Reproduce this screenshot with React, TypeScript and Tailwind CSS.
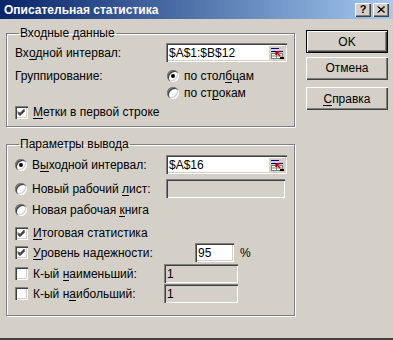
import React from 'react';

const font = "font-['Liberation_Sans','Arial',sans-serif]";

// accelerator letter, underlined like a Windows dialog
const U = ({ children }: { children: React.ReactNode }) => (
  <span className="inline-block border-b border-black leading-[11px]">{children}</span>
);

const sunken = 'shadow-[inset_1px_1px_0_#808080,inset_2px_2px_0_#404040,inset_-1px_-1px_0_#fff,inset_-2px_-2px_0_#d4d0c8]';
const raised = 'shadow-[inset_1px_1px_0_#fff,inset_-1px_-1px_0_#404040,inset_-2px_-2px_0_#808080]';

const Radio = ({ checked = false }: { checked?: boolean }) => (
  <span className={`relative inline-block w-[12px] h-[12px] rounded-full bg-white shrink-0 ${sunken}`}>
    {checked && <span className="absolute left-[4px] top-[4px] w-[4px] h-[4px] rounded-full bg-black" />}
  </span>
);

const Check = ({ checked = false }: { checked?: boolean }) => (
  <span className={`relative inline-block w-[13px] h-[13px] bg-white shrink-0 ${sunken}`}>
    {checked && (
      <svg width="13" height="13" viewBox="0 0 13 13" className="absolute left-0 top-0">
        <path d="M3 5.5 L5 7.5 L9.5 3 M3 6.5 L5 8.5 L9.5 4 M3 7.5 L5 9.5 L9.5 5" stroke="#000" strokeWidth="1" fill="none" />
      </svg>
    )}
  </span>
);

const RefIcon = () => (
  <svg width="16" height="14" viewBox="0 0 16 14">
    <rect x="0" y="0" width="16" height="14" fill="#d4d0c8" />
    <line x1="2" y1="2.5" x2="10" y2="2.5" stroke="#000080" />
    <line x1="2" y1="5.5" x2="14" y2="5.5" stroke="#000080" />
    <rect x="2.5" y="7.5" width="11" height="5" fill="#fff" stroke="#808080" />
    <line x1="7.5" y1="7" x2="7.5" y2="13" stroke="#808080" />
    <line x1="2" y1="10" x2="14" y2="10" stroke="#808080" />
    <path d="M7 6 L11 10 M7 6 L7 9 M7 6 L10 6" stroke="#e00000" strokeWidth="1.5" fill="none" />
    <rect x="11" y="11" width="4" height="2" fill="#000" />
  </svg>
);

const Field = ({ value, icon = false, disabled = false, className = '' }: { value: string; icon?: boolean; disabled?: boolean; className?: string }) => (
  <div className={`flex items-center h-[19px] pl-[3px] pr-[2px] ${disabled ? 'bg-[#d4d0c8]' : 'bg-white'} ${sunken} ${className}`}>
    <span className="flex-1 text-[12px] text-black leading-none">{value}</span>
    {icon && <RefIcon />}
  </div>
);

const Button = ({ children, isDefault = false }: { children: React.ReactNode; isDefault?: boolean }) => (
  <button className={`w-[82px] h-[23px] bg-[#d4d0c8] text-[12px] text-black ${isDefault ? 'border border-black' : ''} ${raised}`}>
    {children}
  </button>
);

const Option = ({ box, children, className = '' }: { box: React.ReactNode; children: React.ReactNode; className?: string }) => (
  <label className={`flex items-center gap-[5px] text-[12px] leading-[14px] ${className}`}>
    {box}
    <span>{children}</span>
  </label>
);

const Group = ({ title, children, className = '' }: { title: string; children: React.ReactNode; className?: string }) => (
  <fieldset className={`border border-[#808080] shadow-[inset_1px_1px_0_#fff,1px_1px_0_#fff] ${className}`}>
    <legend className="ml-[4px] px-[1px] text-[12px] leading-[14px]">{title}</legend>
    {children}
  </fieldset>
);

export default function App() {
  return (
    <div className={`w-[393px] h-[340px] bg-[#d4d0c8] overflow-hidden text-black ${font} border-b-2 border-[#404040]`}>
      <div className="h-[19px] flex items-center justify-between pl-[4px] pr-[4px] bg-gradient-to-r from-[#0a246a] to-[#a6caf0]">
        <span className="text-white font-bold text-[12px] leading-[14px]">Описательная статистика</span>
        <div className="flex gap-[2px]">
          <span className={`w-[16px] h-[14px] bg-[#d4d0c8] flex items-center justify-center text-[11px] leading-none font-bold ${raised}`}>?</span>
          <span className={`w-[16px] h-[14px] bg-[#d4d0c8] flex items-center justify-center ${raised}`}>
            <svg width="8" height="7" viewBox="0 0 8 7"><path d="M0.5 0.5 L7 6.5 M1.5 0.5 L8 6.5 M7 0.5 L0.5 6.5 M8 0.5 L1.5 6.5" stroke="#000" strokeWidth="1" /></svg>
          </span>
        </div>
      </div>

      <div className="flex pl-[6px] pt-[7px] gap-[11px]">
        <div className="w-[289px] flex flex-col gap-[10px]">
          <Group title="Входные данные" className="h-[101px] pl-[8px] pr-[7px]">
            <div className="flex items-center justify-between mt-[3px]">
              <span className="text-[12px] leading-[14px]">Вх<U>о</U>дной интервал:</span>
              <Field value="$A$1:$B$12" icon className="w-[121px]" />
            </div>
            <div className="flex mt-[7px]">
              <span className="text-[12px] leading-[14px] w-[152px]">Группирование:</span>
              <div className="flex flex-col gap-[3px]">
                <Option box={<Radio checked />} className="gap-[4px]">по стол<U>б</U>цам</Option>
                <Option box={<Radio />} className="gap-[4px]">по ст<U>р</U>окам</Option>
              </div>
            </div>
            <Option box={<Check checked />} className="mt-[5px]"><U>М</U>етки в первой строке</Option>
          </Group>

          <Group title="Параметры вывода" className="h-[179px] pl-[8px] pr-[7px]">
            <div className="flex items-center justify-between mt-[4px]">
              <Option box={<Radio checked />}>В<U>ы</U>ходной интервал:</Option>
              <Field value="$A$16" icon className="w-[121px]" />
            </div>
            <div className="flex items-center justify-between mt-[5px]">
              <Option box={<Radio />}>Новый рабочий <U>л</U>ист:</Option>
              <Field value="" disabled className="w-[119px] mr-[2px]" />
            </div>
            <Option box={<Radio />} className="mt-[5px]">Новая рабочая <U>к</U>нига</Option>
            <Option box={<Check checked />} className="mt-[9px]"><U>И</U>тоговая статистика</Option>
            <div className="flex items-center mt-[3px]">
              <Option box={<Check checked />} className="w-[180px]"><U>У</U>ровень надежности:</Option>
              <Field value="95" className="w-[39px]" />
              <span className="text-[12px] ml-[6px]">%</span>
            </div>
            <div className="flex items-center mt-[2px]">
              <Option box={<Check />} className="w-[149px]">К-ый <U>н</U>аименьший:</Option>
              <Field value="1" disabled className="w-[74px]" />
            </div>
            <div className="flex items-center mt-[1px]">
              <Option box={<Check />} className="w-[149px]">К-ый н<U>а</U>ибольший:</Option>
              <Field value="1" disabled className="w-[74px]" />
            </div>
          </Group>
        </div>

        <div className="flex flex-col pt-[4px]">
          <Button isDefault>OK</Button>
          <div className="mt-[2px]"><Button>Отмена</Button></div>
          <div className="mt-[6px]"><Button><U>С</U>правка</Button></div>
        </div>
      </div>
    </div>
  );
}
